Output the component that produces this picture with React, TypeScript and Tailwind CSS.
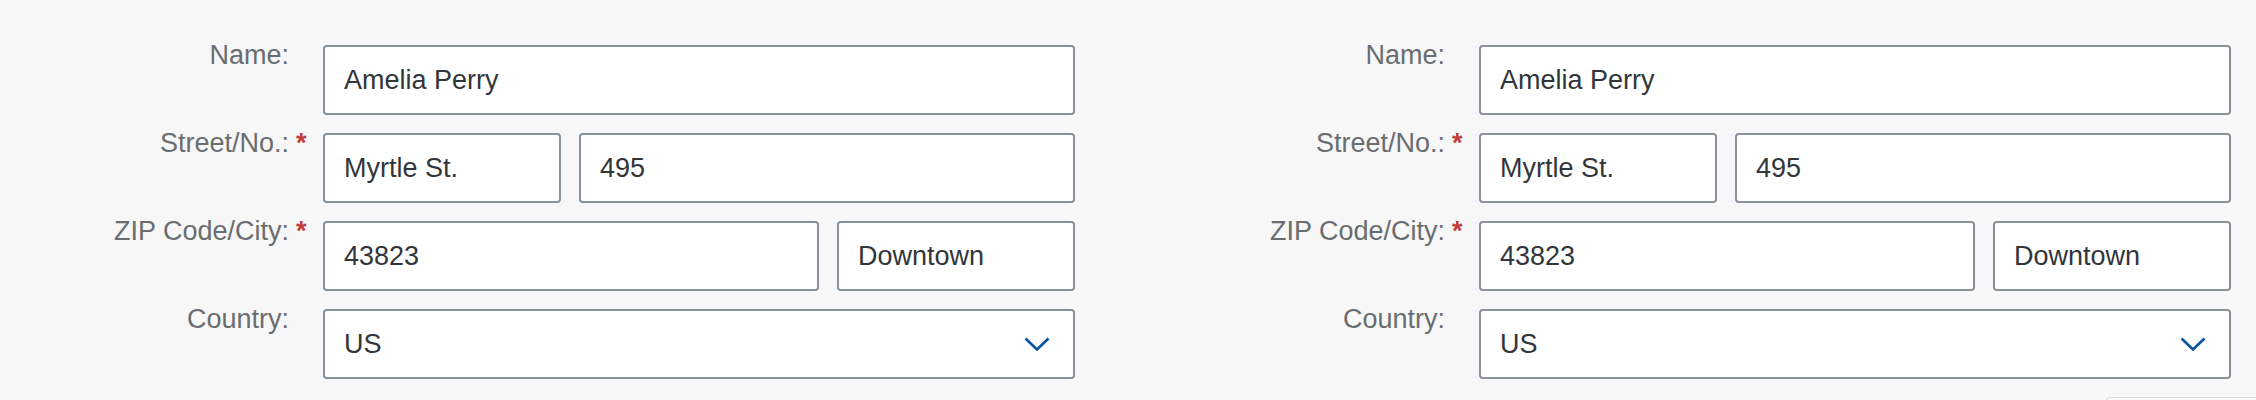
import React from 'react';

const font = { fontFamily: '"Liberation Sans", Arial, sans-serif' };

const Label: React.FC<{ text: string; required?: boolean }> = ({ text, required }) => (
  <div className="flex justify-end -mt-[6px] text-[27px] leading-[32px] text-[#6a6d70]">
    <span className="whitespace-nowrap">{text}</span>
    <span className="w-[18px] pl-[7px] font-bold text-[#c53b3b]">{required ? '*' : ''}</span>
  </div>
);

const Field: React.FC<{ value: string; className?: string; select?: boolean }> = ({ value, className, select }) => (
  <div
    className={`flex h-[70px] items-center rounded-[4px] border-2 border-[#89919a] bg-white pl-[19px] pr-[23px] text-[27px] leading-[32px] text-[#32363a] ${className ?? ''}`}
  >
    <span className="flex-1 whitespace-nowrap">{value}</span>
    {select && (
      <svg width="26" height="14" viewBox="0 0 26 14" fill="none">
        <path d="M1.5 1.5 L13 12.5 L24.5 1.5" stroke="#0854a0" strokeWidth="2.6" />
      </svg>
    )}
  </div>
);

const AddressForm: React.FC = () => (
  <div className="grid grid-cols-[307px_752px] gap-x-4 gap-y-[18px]">
    <Label text="Name:" />
    <Field value="Amelia Perry" />

    <Label text="Street/No.:" required />
    <div className="flex gap-[18px]">
      <Field value="Myrtle St." className="w-[238px]" />
      <Field value="495" className="flex-1" />
    </div>

    <Label text="ZIP Code/City:" required />
    <div className="flex gap-[18px]">
      <Field value="43823" className="flex-1" />
      <Field value="Downtown" className="w-[238px]" />
    </div>

    <Label text="Country:" />
    <Field value="US" select />
  </div>
);

const App: React.FC = () => {
  return (
    <div className="h-[400px] overflow-hidden bg-[#f7f7f7]" style={font}>
      <div className="flex pt-[45px]">
        <div className="w-[1156px] shrink-0">
          <AddressForm />
        </div>
        <div className="flex-1">
          <AddressForm />
        </div>
      </div>
      <div className="mt-[18px] flex justify-end">
        <div className="h-[40px] w-[151px] rounded-tl-[6px] border-l border-t border-[#dcdcdc] bg-[#f9f9f9]" />
      </div>
    </div>
  );
};

export default App;
